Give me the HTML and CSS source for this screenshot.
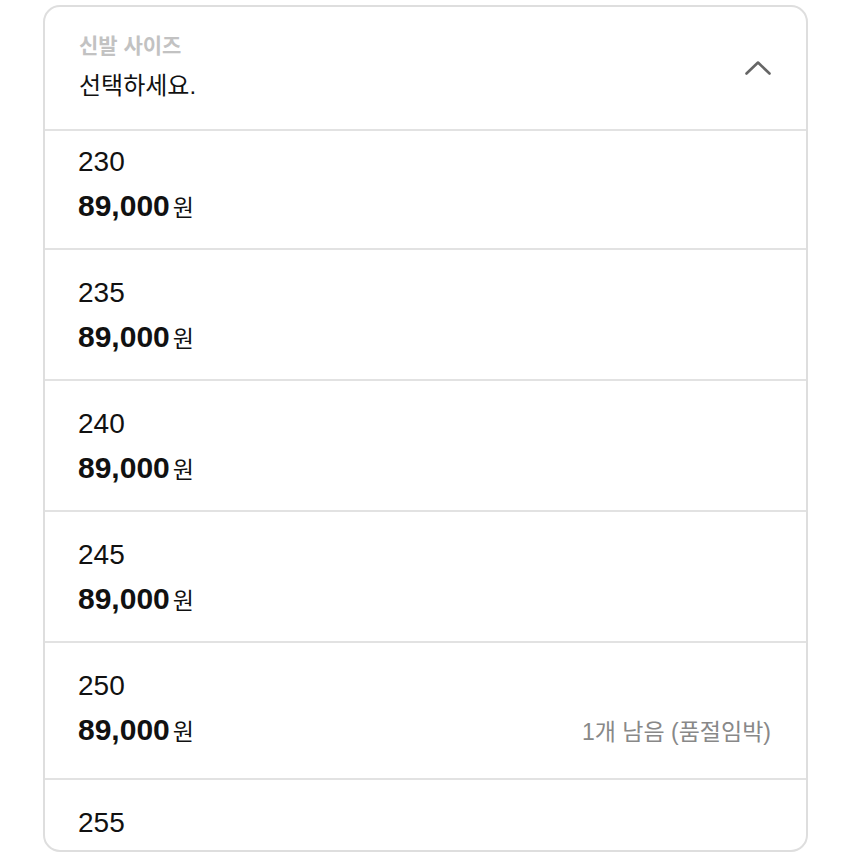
FILE: index.html
```html
<!DOCTYPE html>
<html lang="ko">
<head>
    <meta charset="UTF-8">
    <meta name="viewport" content="width=device-width, initial-scale=1.0">
    <title>신발 사이즈 선택</title>
    <link rel="stylesheet" href="styles.css">
</head>
<body>
    <div class="select-box">
        <div class="select-header">
            <div class="select-text">
                <div class="select-label">신발 사이즈</div>
                <div class="select-value">선택하세요.</div>
            </div>
            <svg class="chevron" width="26" height="15" viewBox="0 0 26 15">
                <polyline points="1.5,13.5 13,2.5 24.5,13.5" fill="none" stroke="#666" stroke-width="2.6" stroke-linecap="round" stroke-linejoin="round"/>
            </svg>
        </div>

        <div class="options">
            <ul class="option-list">
                <li class="option">
                    <div class="option-size">230</div>
                    <div class="option-price"><span class="price">89,000<span class="won">원</span></span></div>
                </li>
                <li class="option">
                    <div class="option-size">235</div>
                    <div class="option-price"><span class="price">89,000<span class="won">원</span></span></div>
                </li>
                <li class="option">
                    <div class="option-size">240</div>
                    <div class="option-price"><span class="price">89,000<span class="won">원</span></span></div>
                </li>
                <li class="option">
                    <div class="option-size">245</div>
                    <div class="option-price"><span class="price">89,000<span class="won">원</span></span></div>
                </li>
                <li class="option low-stock">
                    <div class="option-size">250</div>
                    <div class="option-price">
                        <span class="price">89,000<span class="won">원</span></span>
                        <span class="stock-note">1개 남음 (품절임박)</span>
                    </div>
                </li>
                <li class="option">
                    <div class="option-size">255</div>
                    <div class="option-price"><span class="price">89,000<span class="won">원</span></span></div>
                </li>
            </ul>
        </div>
    </div>
</body>
</html>
```

FILE: styles.css
```css
body {
    margin: 0;
    background-color: #fff;
    font-family: 'Liberation Sans', 'Noto Sans CJK KR', sans-serif;
    color: #111;
}
.select-box {
    display: flex;
    flex-direction: column;
    width: 765px;
    height: 847px;
    margin: 5px 0 0 43px;
    box-sizing: border-box;
    border: 2px solid #dedede;
    border-radius: 17px;
    overflow: hidden;
}
.select-header {
    display: flex;
    align-items: center;
    justify-content: space-between;
    height: 122px;
    padding: 0 35px 0 34px;
    border-bottom: 2px solid #e2e2e2;
    flex-shrink: 0;
}
.select-text {
    display: flex;
    flex-direction: column;
    gap: 10px;
}
.select-label {
    font-size: 21px;
    line-height: 26px;
    font-weight: bold;
    color: #c2c2c2;
}
.select-value {
    font-size: 24px;
    line-height: 34px;
    color: #111;
}
.chevron {
    display: block;
    margin-bottom: 2px;
}
.options {
    flex: 1;
    overflow: hidden;
}
/* list is scrolled a little, so the first row is cut at the top */
.option-list {
    list-style: none;
    margin: -12px 0 0;
    padding: 0;
}
.option {
    padding: 21px 34px 20px 33px;
    border-bottom: 2px solid #e2e2e2;
}
.option.low-stock {
    padding-bottom: 26px;
}
.option-size {
    font-size: 28px;
    line-height: 44px;
}
.option-price {
    display: flex;
    align-items: baseline;
    justify-content: space-between;
    height: 44px;
    line-height: 44px;
}
.price {
    font-size: 30px;
    font-weight: bold;
}
.won {
    font-size: 23px;
    font-weight: normal;
    margin-left: 3px;
}
.stock-note {
    font-size: 23px;
    color: #888;
    margin-right: 1px;
}
```
